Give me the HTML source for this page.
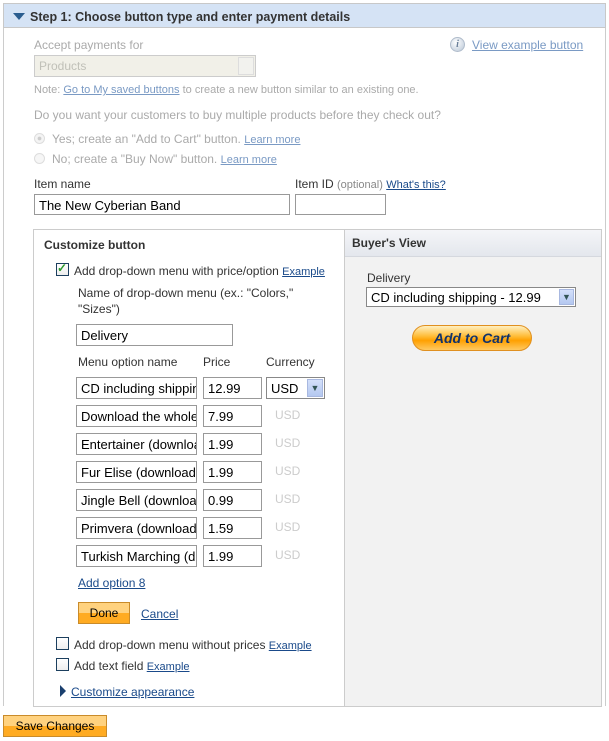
<!DOCTYPE html>
<html><head><style>
*{box-sizing:border-box;margin:0;padding:0}
body{width:609px;height:741px;background:#fff;font-family:"Liberation Sans",Arial,sans-serif;font-size:12px;color:#333;position:relative;overflow:hidden}
.a{position:absolute;white-space:nowrap}
.g{color:#aaa}
a,.l{color:#1a4a8a;text-decoration:underline}
.lg{color:#7a9ac4;text-decoration:underline}
.in{position:absolute;border:1px solid #999;background:#fff;height:22px;font-size:13px;color:#000;padding:3px 3px 0 4px;overflow:hidden;white-space:nowrap}
.usd{position:absolute;color:#ccc;font-size:12px}
.btn{position:absolute;background:linear-gradient(#ffd27f 0,#ffd27f 50%,#ffab22 50%,#ffab22 100%);border:1px solid #c98b2a;color:#000;font-size:12px;text-align:center}
.cb{position:absolute;width:13px;height:13px;border:1px solid #1c3f5e;background:linear-gradient(#fff,#eee)}
</style></head><body>
<div class="a" style="left:3px;top:3px;width:603px;height:703px;border-left:1px solid #ccc;border-right:1px solid #ccc"></div>
<div class="a" style="left:3px;top:3px;width:603px;height:25px;background:#d5e3f5;border:1px solid #c8c8c8"></div>
<div class="a" style="left:13px;top:13px;width:0;height:0;border-left:6px solid transparent;border-right:6px solid transparent;border-top:7px solid #2a5d8f"></div>
<div class="a" style="left:30px;top:10px;font-weight:bold;font-size:12.5px;color:#333">Step 1: Choose button type and enter payment details</div>

<div class="a g" style="left:34px;top:38px">Accept payments for</div>
<div class="a" style="left:450px;top:37px;width:15px;height:15px;border-radius:50%;background:radial-gradient(circle at 40% 35%,#fff,#b8c6d6);border:1px solid #b0bccb;color:#6a7f99;font-size:10px;font-style:italic;font-family:'Liberation Serif',serif;text-align:center;line-height:13px;font-weight:bold">i</div>
<div class="a lg" style="left:472px;top:38px">View example button</div>
<div class="a" style="left:34px;top:55px;width:222px;height:22px;background:#f1f0e8;border:1px solid #ccc;color:#c0c0b8;padding:3px 4px;font-size:12px">Products</div>
<div class="a" style="left:238px;top:57px;width:16px;height:18px;border:1px solid #ddd;background:#f2f2ee"></div>
<div class="a g" style="left:34px;top:84px;font-size:11px">Note: <span class="lg">Go to My saved buttons</span> to create a new button similar to an existing one.</div>
<div class="a g" style="left:34px;top:108px">Do you want your customers to buy multiple products before they check out?</div>
<div class="a" style="left:34px;top:133px;width:11px;height:11px;border-radius:50%;border:1px solid #ddd;background:radial-gradient(circle,#ccc 25%,#f4f4f4 35%)"></div>
<div class="a g" style="left:52px;top:132px">Yes; create an "Add to Cart" button. <span class="lg" style="font-size:11px">Learn more</span></div>
<div class="a" style="left:34px;top:153px;width:11px;height:11px;border-radius:50%;border:1px solid #ddd;background:#f6f6f6"></div>
<div class="a g" style="left:52px;top:152px">No; create a "Buy Now" button. <span class="lg" style="font-size:11px">Learn more</span></div>
<div class="a" style="left:34px;top:177px">Item name</div>
<div class="a" style="left:295px;top:177px">Item ID <span style="color:#888;font-size:11px">(optional)</span> <span class="l" style="font-size:11px">What's this?</span></div>
<div class="in" style="left:34px;top:194px;width:256px;height:21px">The New Cyberian Band</div>
<div class="in" style="left:295px;top:194px;width:91px;height:21px"></div>

<div class="a" style="left:33px;top:229px;width:569px;height:478px;border:1px solid #ccc;background:#fff"></div>
<div class="a" style="left:344px;top:230px;width:257px;height:476px;background:#f2f2f2;border-left:1px solid #ccc"></div>
<div class="a" style="left:345px;top:230px;width:256px;height:27px;background:linear-gradient(#f4f5f8,#e4e7ed);border-bottom:1px solid #d5d8de"></div>
<div class="a" style="left:352px;top:236px;font-weight:bold;color:#333">Buyer's View</div>
<div class="a" style="left:367px;top:271px">Delivery</div>
<div class="a" style="left:366px;top:287px;width:210px;height:20px;border:1px solid #888;background:#fff;padding:2px 4px;color:#000;font-size:13px">CD including shipping - 12.99</div>
<div class="a" style="left:559px;top:289px;width:15px;height:16px;background:linear-gradient(#d4e0fa,#b4c8f0);border:1px solid #a8b8e0;color:#355;font-size:9px;text-align:center;line-height:15px">&#9660;</div>
<div class="a" style="left:412px;top:325px;width:120px;height:26px;border-radius:13px;border:1px solid #e09020;background:linear-gradient(#fff0c0 0,#ffc040 40%,#ffa000 60%,#ffc860 100%);color:#12336b;font-weight:bold;font-style:italic;font-size:14px;text-align:center;line-height:24px">Add to Cart</div>

<div class="a" style="left:44px;top:238px;font-weight:bold">Customize button</div>
<div class="cb" style="left:56px;top:263px"></div>
<div class="a" style="left:57px;top:261px;color:#2a9a2a;font-size:12px;font-weight:bold">&#10003;</div>
<div class="a" style="left:74px;top:264px">Add drop-down menu with price/option <span class="l" style="font-size:11px">Example</span></div>
<div class="a" style="left:78px;top:286px">Name of drop-down menu (ex.: "Colors,"</div>
<div class="a" style="left:78px;top:302px">"Sizes")</div>
<div class="in" style="left:76px;top:324px;width:157px">Delivery</div>
<div class="a" style="left:78px;top:355px">Menu option name</div>
<div class="a" style="left:203px;top:355px">Price</div>
<div class="a" style="left:266px;top:355px">Currency</div>

<div class="in" style="left:76px;top:377px;width:121px">CD including shipping</div>
<div class="in" style="left:203px;top:377px;width:59px">12.99</div>
<div class="in" style="left:266px;top:377px;width:59px;border-color:#888">USD</div>
<div class="a" style="left:307px;top:379px;width:16px;height:18px;background:linear-gradient(#d4e0fa,#b4c8f0);border:1px solid #a8b8e0;color:#355;font-size:9px;text-align:center;line-height:17px">&#9660;</div>

<div class="in" style="left:76px;top:405px;width:121px">Download the whole album</div>
<div class="in" style="left:203px;top:405px;width:59px">7.99</div><div class="usd" style="left:275px;top:408px">USD</div>
<div class="in" style="left:76px;top:433px;width:121px">Entertainer (download)</div>
<div class="in" style="left:203px;top:433px;width:59px">1.99</div><div class="usd" style="left:275px;top:436px">USD</div>
<div class="in" style="left:76px;top:461px;width:121px">Fur Elise (download)</div>
<div class="in" style="left:203px;top:461px;width:59px">1.99</div><div class="usd" style="left:275px;top:464px">USD</div>
<div class="in" style="left:76px;top:489px;width:121px">Jingle Bell (download)</div>
<div class="in" style="left:203px;top:489px;width:59px">0.99</div><div class="usd" style="left:275px;top:492px">USD</div>
<div class="in" style="left:76px;top:517px;width:121px">Primvera (download)</div>
<div class="in" style="left:203px;top:517px;width:59px">1.59</div><div class="usd" style="left:275px;top:520px">USD</div>
<div class="in" style="left:76px;top:545px;width:121px">Turkish Marching (d</div>
<div class="in" style="left:203px;top:545px;width:59px">1.99</div><div class="usd" style="left:275px;top:548px">USD</div>

<div class="a l" style="left:78px;top:576px">Add option 8</div>
<div class="btn" style="left:78px;top:602px;width:52px;height:22px;line-height:20px">Done</div>
<div class="a l" style="left:141px;top:607px">Cancel</div>
<div class="cb" style="left:56px;top:637px"></div>
<div class="a" style="left:74px;top:638px">Add drop-down menu without prices <span class="l" style="font-size:11px">Example</span></div>
<div class="cb" style="left:56px;top:658px"></div>
<div class="a" style="left:74px;top:659px">Add text field <span class="l" style="font-size:11px">Example</span></div>
<div class="a" style="left:60px;top:685px;width:0;height:0;border-top:6px solid transparent;border-bottom:6px solid transparent;border-left:6px solid #1a3f6e"></div>
<div class="a l" style="left:71px;top:685px">Customize appearance</div>
<div class="btn" style="left:3px;top:715px;width:104px;height:22px;line-height:20px">Save Changes</div>
</body></html>
